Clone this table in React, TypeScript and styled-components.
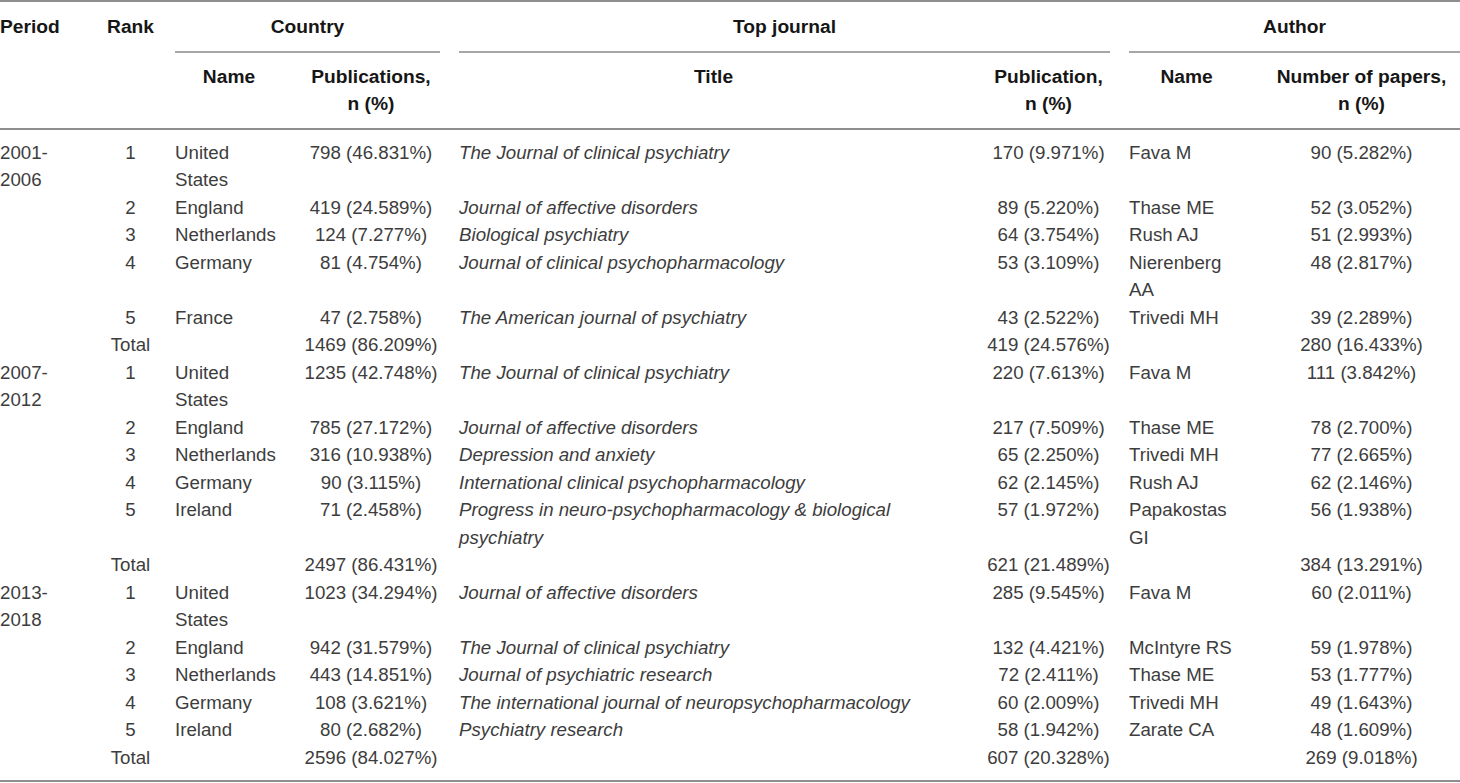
import React from 'react';
import styled, { createGlobalStyle } from 'styled-components';

const GlobalStyle = createGlobalStyle`
  html, body {
    margin: 0;
    padding: 0;
    background: #ffffff;
  }
`;

const StyledTable = styled.table`
  width: 1460px;
  table-layout: fixed;
  border-collapse: separate;
  border-spacing: 0;
  border-top: 2px solid #8e8e8e;
  border-bottom: 2px solid #8e8e8e;

  font-family: 'Liberation Sans', Arial, sans-serif;
  font-size: 18.7px;
  line-height: 27.5px;
  color: #3d3d3d;
`;

const HeadCell = styled.th<{ $align?: 'left' | 'center'; $first?: boolean; $last?: boolean }>`
  padding: 10px 9.5px;
  padding-left: ${(p) => (p.$first ? '0' : '9.5px')};
  padding-right: ${(p) => (p.$last ? '0' : '9.5px')};
  vertical-align: top;
  text-align: ${(p) => p.$align || 'center'};
  font-size: 19.2px;
  font-weight: 700;
  color: #161616;
  border-bottom: 2px solid #8e8e8e;
`;

const TopHeadCell = styled(HeadCell)`
  padding-top: 11px;
`;

const GroupCell = styled.th<{ $last?: boolean }>`
  padding: 11px 9.5px 0;
  padding-right: ${(p) => (p.$last ? '0' : '9.5px')};
  vertical-align: top;
  text-align: center;
  font-size: 19.2px;
  font-weight: 700;
  color: #161616;
`;

const GroupRule = styled.div`
  padding-bottom: 10px;
  border-bottom: 2px solid #a6a6a6;
`;

const Body = styled.tbody`
  tr:first-child > td {
    padding-top: 9px;
  }
  tr:last-child > td {
    padding-bottom: 9px;
  }
`;

const Cell = styled.td<{ $align?: 'left' | 'center'; $italic?: boolean; $first?: boolean; $last?: boolean }>`
  padding: 0 9.5px;
  padding-left: ${(p) => (p.$first ? '0' : '9.5px')};
  padding-right: ${(p) => (p.$last ? '0' : '9.5px')};
  vertical-align: top;
  text-align: ${(p) => p.$align || 'left'};
  font-style: ${(p) => (p.$italic ? 'italic' : 'normal')};
  font-weight: 400;
`;

type Row = [string, string, string, string, string, string, string];

interface Group {
  period: string;
  rows: Row[];
  total: [string, string, string];
}

const groups: Group[] = [
  {
    period: '2001-2006',
    rows: [
      ['1', 'United States', '798 (46.831%)', 'The Journal of clinical psychiatry', '170 (9.971%)', 'Fava M', '90 (5.282%)'],
      ['2', 'England', '419 (24.589%)', 'Journal of affective disorders', '89 (5.220%)', 'Thase ME', '52 (3.052%)'],
      ['3', 'Netherlands', '124 (7.277%)', 'Biological psychiatry', '64 (3.754%)', 'Rush AJ', '51 (2.993%)'],
      ['4', 'Germany', '81 (4.754%)', 'Journal of clinical psychopharmacology', '53 (3.109%)', 'Nierenberg AA', '48 (2.817%)'],
      ['5', 'France', '47 (2.758%)', 'The American journal of psychiatry', '43 (2.522%)', 'Trivedi MH', '39 (2.289%)'],
    ],
    total: ['1469 (86.209%)', '419 (24.576%)', '280 (16.433%)'],
  },
  {
    period: '2007-2012',
    rows: [
      ['1', 'United States', '1235 (42.748%)', 'The Journal of clinical psychiatry', '220 (7.613%)', 'Fava M', '111 (3.842%)'],
      ['2', 'England', '785 (27.172%)', 'Journal of affective disorders', '217 (7.509%)', 'Thase ME', '78 (2.700%)'],
      ['3', 'Netherlands', '316 (10.938%)', 'Depression and anxiety', '65 (2.250%)', 'Trivedi MH', '77 (2.665%)'],
      ['4', 'Germany', '90 (3.115%)', 'International clinical psychopharmacology', '62 (2.145%)', 'Rush AJ', '62 (2.146%)'],
      ['5', 'Ireland', '71 (2.458%)', 'Progress in neuro-psychopharmacology & biological psychiatry', '57 (1.972%)', 'Papakostas GI', '56 (1.938%)'],
    ],
    total: ['2497 (86.431%)', '621 (21.489%)', '384 (13.291%)'],
  },
  {
    period: '2013-2018',
    rows: [
      ['1', 'United States', '1023 (34.294%)', 'Journal of affective disorders', '285 (9.545%)', 'Fava M', '60 (2.011%)'],
      ['2', 'England', '942 (31.579%)', 'The Journal of clinical psychiatry', '132 (4.421%)', 'McIntyre RS', '59 (1.978%)'],
      ['3', 'Netherlands', '443 (14.851%)', 'Journal of psychiatric research', '72 (2.411%)', 'Thase ME', '53 (1.777%)'],
      ['4', 'Germany', '108 (3.621%)', 'The international journal of neuropsychopharmacology', '60 (2.009%)', 'Trivedi MH', '49 (1.643%)'],
      ['5', 'Ireland', '80 (2.682%)', 'Psychiatry research', '58 (1.942%)', 'Zarate CA', '48 (1.609%)'],
    ],
    total: ['2596 (84.027%)', '607 (20.328%)', '269 (9.018%)'],
  },
];

// column widths include the 9.5px side paddings
const columns = [95.5, 70, 127, 157, 528, 142, 134, 206.5];

const App = () => {
  return (
    <>
      <GlobalStyle />
      <StyledTable>
        <colgroup>
          {columns.map((w, i) => (
            <col key={i} style={{ width: w }} />
          ))}
        </colgroup>
        <thead>
          <tr>
            <TopHeadCell rowSpan={2} $align="left" $first>Period</TopHeadCell>
            <TopHeadCell rowSpan={2}>Rank</TopHeadCell>
            <GroupCell colSpan={2}><GroupRule>Country</GroupRule></GroupCell>
            <GroupCell colSpan={2}><GroupRule>Top journal</GroupRule></GroupCell>
            <GroupCell colSpan={2} $last><GroupRule>Author</GroupRule></GroupCell>
          </tr>
          <tr>
            <HeadCell>Name</HeadCell>
            <HeadCell>Publications,<br />n (%)</HeadCell>
            <HeadCell>Title</HeadCell>
            <HeadCell>Publication,<br />n (%)</HeadCell>
            <HeadCell>Name</HeadCell>
            <HeadCell $last>Number of papers,<br />n (%)</HeadCell>
          </tr>
        </thead>
        <Body>
          {groups.map((g) => (
            <React.Fragment key={g.period}>
              {g.rows.map((r, i) => (
                <tr key={r[0]}>
                  {i === 0 && (
                    <Cell rowSpan={g.rows.length + 1} $first>{g.period}</Cell>
                  )}
                  <Cell $align="center">{r[0]}</Cell>
                  <Cell>{r[1]}</Cell>
                  <Cell $align="center">{r[2]}</Cell>
                  <Cell $italic>{r[3]}</Cell>
                  <Cell $align="center">{r[4]}</Cell>
                  <Cell>{r[5]}</Cell>
                  <Cell $align="center" $last>{r[6]}</Cell>
                </tr>
              ))}
              <tr>
                <Cell $align="center">Total</Cell>
                <Cell />
                <Cell $align="center">{g.total[0]}</Cell>
                <Cell />
                <Cell $align="center">{g.total[1]}</Cell>
                <Cell />
                <Cell $align="center" $last>{g.total[2]}</Cell>
              </tr>
            </React.Fragment>
          ))}
        </Body>
      </StyledTable>
    </>
  );
};

export default App;
